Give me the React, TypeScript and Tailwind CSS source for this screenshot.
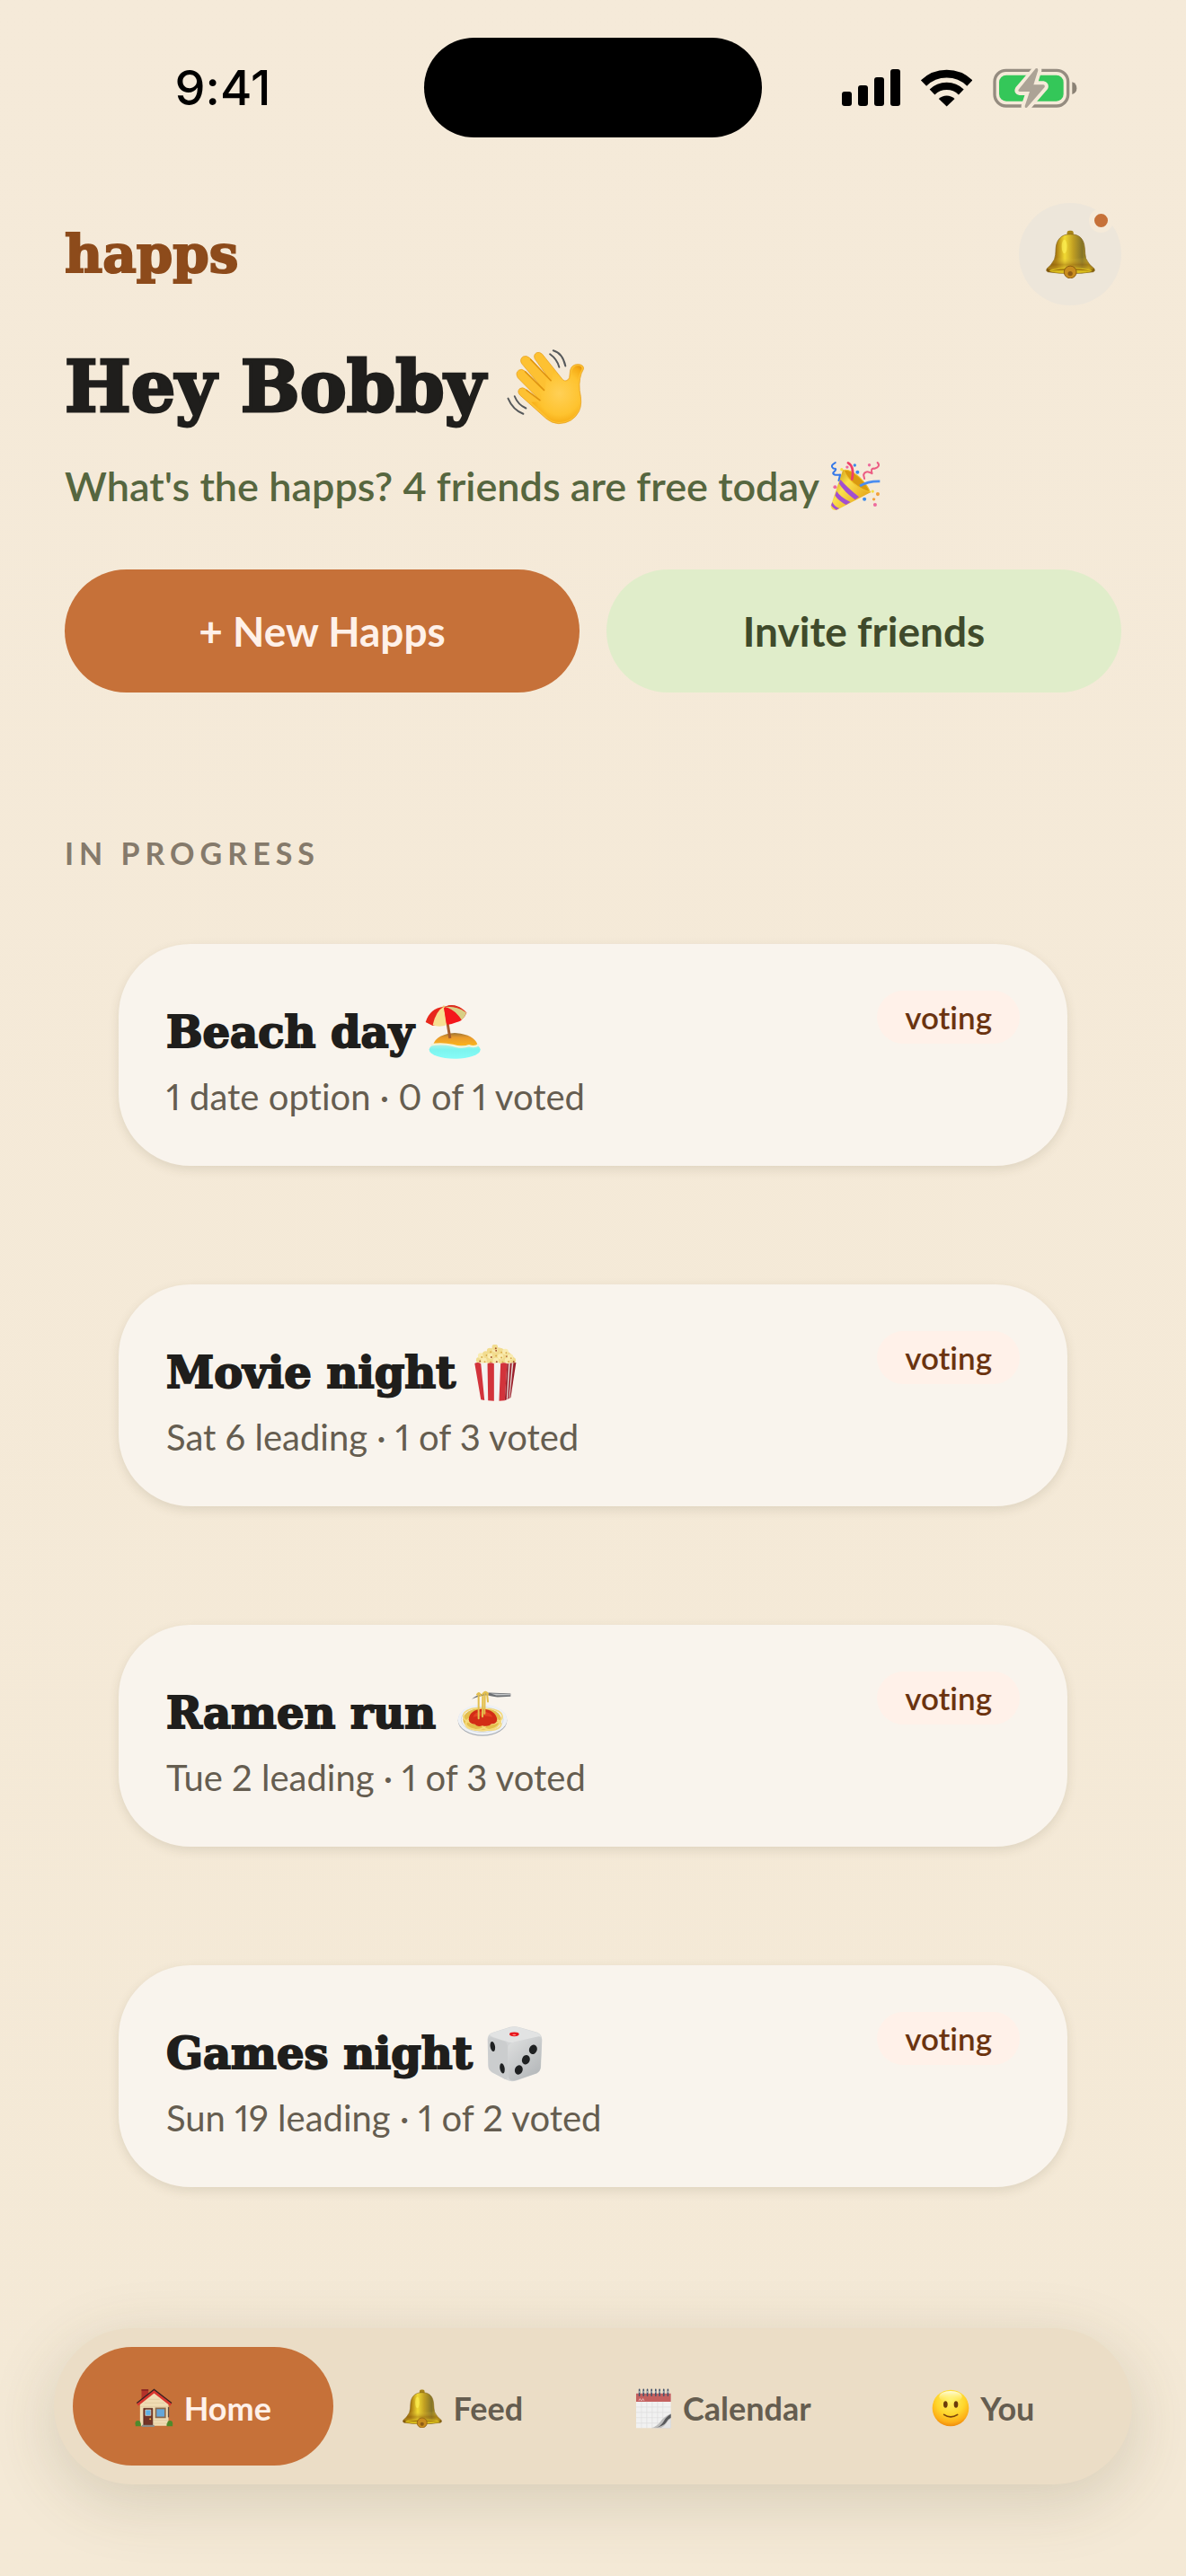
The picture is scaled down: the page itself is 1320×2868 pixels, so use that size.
import { useId, type ReactNode } from "react";

const display = "font-['DejaVu_Serif',serif] font-bold";

function Wave() {
  const id = useId();
  const tone = `url(#${id})`;
  return (
    <svg role="img" aria-label="waving hand" viewBox="68 52 262 254" className="h-[84px] w-[87px] shrink-0">
      <defs>
        <radialGradient id={id} gradientUnits="userSpaceOnUse" cx="245" cy="200" r="120">
          <stop offset="0" stopColor="#ffd056" />
          <stop offset="0.6" stopColor="#fec32f" />
          <stop offset="0.85" stopColor="#f6ab14" />
          <stop offset="1" stopColor="#e08a0a" />
        </radialGradient>
      </defs>
      <path
        fill="#fdc132"
        stroke="#e39a12"
        strokeWidth="2"
        d="M187 68 L256 154 Q268 164 278 148 L281 122 Q286 102 308 102 Q328 104 326 118 Q309 146 313 190 Q323 235 311 260 Q290 301 242 302 Q218 301 200 285 L112 206 Q101 194 111 184 Q121 177 133 187 L180 224 L105 148 Q95 131 108 122 Q118 116 129 125 L193 190 L118 100 Q109 85 123 76 Q134 71 145 81 L215 158 L162 84 Q156 70 168 63 Q178 59 187 68 Z"
      />
      <path
        fill={tone}
        d="M224 120 L256 156 Q270 166 281 150 Q284 116 300 108 Q320 104 320 118 Q304 146 309 190 Q319 235 307 258 Q286 296 242 297 Q218 296 204 281 L150 230 L186 226 L172 168 L197 190 L200 140 L219 158Z"
      />
      <path fill="none" stroke="#df9410" strokeWidth="5" strokeLinecap="round" d="M148 86 L216 157 M130 127 L193 189 M134 189 L179 223" />
      <g fill="none" stroke="#56595b" strokeWidth="6" strokeLinecap="round">
        <path d="M213 68 Q237 85 244 112M224 56 Q255 64 265 108M94 210 Q105 238 132 250M72 217 Q88 255 123 269" />
      </g>
    </svg>
  );
}

function Party() {
  const id = useId();
  return (
    <svg role="img" aria-label="party popper" viewBox="1150 433 166 166" className="size-[56px] shrink-0">
      <defs>
        <linearGradient id={id} x1="0" y1="0.2" x2="0.8" y2="0.8">
          <stop offset="0" stopColor="#c8930c" />
          <stop offset="0.4" stopColor="#fbe04d" />
          <stop offset="1" stopColor="#e7a91b" />
        </linearGradient>
      </defs>
      <path fill={`url(#${id})`} d="M1192 463 L1152 582 Q1153 599 1172 595 L1284 537 Q1250 480 1192 463Z" />
      <path fill="#a24fd0" d="M1184 495 Q1205 520 1245 552 L1232 561 Q1200 540 1179 508Z M1171 533 Q1185 555 1217 569 L1202 578 Q1178 566 1166 548Z M1157 569 Q1164 583 1180 590 L1170 595 Q1157 588 1153 580Z" />
      <path fill="#d99a10" stroke="#f2c22e" strokeWidth="3" d="M1195 464 Q1215 460 1246 487 Q1275 515 1281 536 Q1255 530 1226 506 Q1200 482 1195 464Z" />
      <path fill="none" stroke="#ef3f68" strokeWidth="8" strokeLinecap="round" d="M1209 440 Q1231 452 1222 494" />
      <path fill="none" stroke="#4b8df0" strokeWidth="8" d="M1248 516 Q1275 500 1314 501" />
      <path fill="none" stroke="#3478e8" strokeWidth="6" strokeLinecap="round" strokeLinejoin="round" d="M1167 439 Q1148 449 1160 458 Q1177 458 1160 472 Q1157 482 1183 479 L1178 498" />
      <path fill="none" stroke="#ec5d83" strokeWidth="6" strokeLinecap="round" strokeLinejoin="round" d="M1306 439 Q1318 452 1296 459 Q1282 456 1288 475 Q1265 462 1260 480 L1263 492" />
      <g fill="#3d8bea"><circle cx="1231" cy="448" r="5" /><circle cx="1240" cy="471" r="6" /><circle cx="1263" cy="560" r="6" /></g>
      <g fill="#ed6b9d"><circle cx="1206" cy="454" r="5" /><circle cx="1279" cy="447" r="5" /><circle cx="1166" cy="520" r="6" /><circle cx="1298" cy="578" r="6" /></g>
      <g fill="#f3a13b"><circle cx="1307" cy="543" r="6" /><circle cx="1294" cy="560" r="5" /></g>
      <g fill="#f5df42"><circle cx="1188" cy="462" r="5" /><circle cx="1290" cy="534" r="5" /></g>
    </svg>
  );
}

function Bell({ className }: { className: string }) {
  const id = useId();
  return (
    <svg role="img" aria-label="bell" viewBox="787 618 168 164" className={className}>
      <defs>
        <linearGradient id={id}>
          <stop offset="0" stopColor="#7d5209" />
          <stop offset="0.2" stopColor="#a8780f" />
          <stop offset="0.38" stopColor="#f2da33" />
          <stop offset="0.55" stopColor="#c2a022" />
          <stop offset="0.74" stopColor="#857428" />
          <stop offset="0.88" stopColor="#b89a1c" />
          <stop offset="1" stopColor="#765008" />
        </linearGradient>
        <linearGradient id={`${id}b`} x1="0" y1="0" x2="0" y2="1">
          <stop offset="0" stopColor="#f0d84a" stopOpacity="0" />
          <stop offset="0.55" stopColor="#9a6a10" stopOpacity="0.5" />
          <stop offset="1" stopColor="#f0d030" stopOpacity="0.5" />
        </linearGradient>
      </defs>
      <rect x="859" y="620" width="22" height="18" rx="8" fill="#a88518" />
      <path fill={`url(#${id})`} stroke="#7b5a12" strokeWidth="2" d="M870 632 C838 632 823 652 821 680 Q821 704 816 718 Q806 738 790 750 Q787 757 793 760 Q870 772 949 760 Q955 757 952 750 Q930 733 923 714 Q920 700 919 678 C916 648 902 632 870 632Z" />
      <path fill={`url(#${id}b)`} d="M818 710 Q870 722 922 710 Q932 735 951 750 Q870 764 791 750 Q810 732 818 710Z" />
      <ellipse cx="871" cy="756" rx="72" ry="9" fill="#d8bb1c" />
      <path fill="#875708" d="M800 757 Q870 742 942 757 Q870 750 800 757Z" />
      <circle cx="870" cy="761" r="21" fill="#c98c1e" stroke="#8a5c10" strokeWidth="3" />
      <circle cx="870" cy="766" r="8" fill="#8f5c16" />
      <ellipse cx="850" cy="674" rx="9" ry="24" fill="#fff35a" opacity="0.6" />
    </svg>
  );
}

function Beach() {
  const id = useId();
  return (
    <svg role="img" aria-label="beach with umbrella" viewBox="42 52 190 186" className="h-[62px] w-[63px] shrink-0">
      <defs>
        <linearGradient id={id} x1="0" y1="0" x2="0" y2="1">
          <stop offset="0" stopColor="#d6efe0" />
          <stop offset="0.5" stopColor="#7df4ee" />
          <stop offset="1" stopColor="#86fcf8" />
        </linearGradient>
        <linearGradient id={`${id}s`} x1="0" y1="0" x2="0" y2="1">
          <stop offset="0" stopColor="#9c7434" />
          <stop offset="0.35" stopColor="#e89a2c" />
          <stop offset="1" stopColor="#fdb51c" />
        </linearGradient>
      </defs>
      <ellipse cx="142" cy="204" rx="86" ry="31" fill={`url(#${id})`} />
      <path fill={`url(#${id}s)`} d="M70 186 Q82 152 142 148 Q206 152 218 186 Q210 196 190 188 Q160 196 135 188 Q100 186 70 186Z" />
      <path fill="none" stroke="#f3f4d8" strokeWidth="7" d="M62 188 Q100 182 135 190 Q165 200 190 191 Q210 198 222 187" />
      <path stroke="#a55c2e" strokeWidth="9" d="M117 112 L126 166" />
      <path fill="#e8281c" d="M44 112 Q58 66 105 60 Q150 44 182 80 Q176 96 163 106 L114 116 L68 124Z" />
      <path fill="#f7e092" d="M105 60 Q78 75 68 122 Q90 130 114 122 Z" />
      <path fill="#f4171c" d="M105 60 L116 121 Q145 116 165 105 Q143 68 105 60Z" />
      <path fill="#d8cf86" d="M105 60 Q153 57 181 80 Q177 93 165 105 Q143 68 105 60Z" />
      <path fill="#d83324" d="M113 59 Q135 48 164 66 Q140 58 113 59Z" />
      <circle cx="105" cy="60" r="4" fill="#e9c878" />
    </svg>
  );
}

function Popcorn() {
  const kernels = [
    [104, 102], [120, 104], [140, 105], [160, 104], [180, 105], [200, 103], [217, 103], [110, 88], [126, 82],
    [142, 88], [158, 84], [176, 90], [194, 86], [208, 92], [140, 71], [158, 66], [176, 72], [192, 74], [157, 59],
  ];
  return (
    <svg role="img" aria-label="popcorn" viewBox="86 50 146 190" className="h-[63px] w-[49px] shrink-0">
      <path fill="#efd98e" d="M98 110 Q98 80 130 74 Q158 48 190 68 Q222 80 226 112Z" />
      {kernels.map(([x, y], i) => (
        <g key={i}>
          <circle cx={x} cy={y} r="10" fill={i % 2 ? "#f9ebb0" : "#f2dc8f"} />
          <circle cx={x + 3} cy={y + 4} r="3" fill={i % 3 ? "#d9ab4a" : "#a5542c"} />
        </g>
      ))}
      <path fill="#f4f2f0" d="M89 112 Q100 108 110 114 Q122 108 132 114 Q143 108 154 114 Q165 108 176 114 Q187 108 198 114 L191 238 L112 237Z" />
      <path fill="#d2333b" d="M89 113 Q100 107 110 114 L122 237 L110 235Z M132 114 Q143 108 154 114 L154 239 L134 238Z M176 114 Q187 108 198 114 L190 238 L171 239Z" />
      <path fill="#9c1f2b" d="M198 114 L228 110 L210 228 L190 238Z" />
      <path fill="#e3d8d4" d="M203 113 L208 112 L200 232 L196 234Z M214 111 L219 111 L207 229 L204 230Z" />
    </svg>
  );
}

function Spaghetti() {
  return (
    <svg role="img" aria-label="spaghetti" viewBox="56 60 180 158" className="h-[53px] w-[60px] shrink-0">
      <ellipse cx="140" cy="163" rx="82" ry="52" fill="#a9aeb5" />
      <ellipse cx="140" cy="160" rx="82" ry="51" fill="#eef1f5" />
      <ellipse cx="139" cy="160" rx="70" ry="42" fill="#f5f6f7" stroke="#c6cbd2" strokeWidth="2" />
      <ellipse cx="139" cy="160" rx="64" ry="39" fill="#e3bd4c" />
      <g fill="none" stroke="#f5da7c" strokeWidth="5">
        <ellipse cx="120" cy="148" rx="44" ry="26" />
        <ellipse cx="160" cy="150" rx="46" ry="26" />
        <ellipse cx="140" cy="172" rx="56" ry="24" />
        <ellipse cx="118" cy="176" rx="34" ry="18" />
        <ellipse cx="170" cy="176" rx="32" ry="19" />
      </g>
      <path fill="#d22c16" d="M94 160 Q96 128 140 124 Q184 128 189 160 Q186 176 170 174 Q160 186 140 180 Q122 186 115 176 Q96 174 94 160Z" />
      <path fill="#ec4a27" opacity="0.7" d="M108 152 Q112 134 140 132 Q168 134 174 152 Q140 142 108 152Z" />
      <path fill="#6d7074" d="M104 92 Q120 76 150 72 L162 70 L234 73 L234 83 L190 85 Q168 82 158 78 Q125 80 104 92Z" />
      <path fill="#c8cacc" d="M168 73 L234 75 L234 78 L186 79Z" />
      <g fill="none" stroke="#e3bf4e" strokeWidth="6" strokeLinecap="round">
        <path d="M127 74 L127 156 M141 82 L140 150 M148 70 L147 140 M155 72 L158 100" />
        <path d="M122 76 Q130 66 134 80 M140 76 Q150 60 158 74" />
      </g>
    </svg>
  );
}

function Dice() {
  const id = useId();
  return (
    <svg role="img" aria-label="game die" viewBox="68 50 186 188" className="h-[63px] w-[62px] shrink-0">
      <defs>
        <linearGradient id={id} x1="0" y1="0" x2="0.7" y2="1">
          <stop offset="0" stopColor="#e0e1e1" />
          <stop offset="1" stopColor="#b5b8ba" />
        </linearGradient>
      </defs>
      <path fill="#d2d4d5" d="M70 100 Q68 82 84 74 L145 55 Q160 51 178 56 L236 73 Q252 80 252 98 L248 190 Q246 204 234 210 L168 233 Q150 240 134 232 L84 206 Q72 198 72 184Z" />
      <path fill="#e2e3e3" d="M76 82 Q80 76 90 73 L145 56 Q160 52 178 57 L236 74 Q246 78 248 86 Q230 94 165 104 Q145 110 132 102 Q90 92 76 82Z" />
      <path fill={`url(#${id})`} d="M138 122 Q140 108 160 104 L240 86 Q251 86 251 100 L247 190 Q245 204 234 209 L168 232 Q140 240 138 216Z" />
      <path fill="#cbcdce" d="M71 98 Q74 84 92 92 L124 102 Q138 108 137 124 L137 220 Q136 236 122 226 L84 205 Q73 197 73 184Z" />
      <ellipse cx="159" cy="79" rx="16" ry="7" fill="#e8161c" />
      <ellipse cx="159" cy="81" rx="6" ry="2" fill="#ff8a84" />
      <g fill="#1f2122">
        <ellipse cx="87" cy="120" rx="8" ry="17" transform="rotate(-10 87 120)" />
        <ellipse cx="119" cy="193" rx="8" ry="17" transform="rotate(-10 119 193)" />
        <ellipse cx="222" cy="130" rx="13" ry="16" transform="rotate(20 222 130)" />
        <ellipse cx="198" cy="164" rx="13" ry="16" transform="rotate(20 198 164)" />
        <ellipse cx="174" cy="198" rx="13" ry="16" transform="rotate(20 174 198)" />
      </g>
    </svg>
  );
}

function House() {
  return (
    <svg role="img" aria-label="house" viewBox="58 89 128 132" className="h-[44px] w-[43px] shrink-0">
      <path fill="#b3322a" d="M80 93 H103 V112 L80 132Z" />
      <path fill="#7e241f" d="M80 93 H103 V97 H80Z" />
      <path fill="#f0dcb4" d="M75 140 L122 102 L170 140 V214 H75Z" />
      <path stroke="#dcc598" strokeWidth="2" d="M76 150 H169 M90 138 H157 M104 126 H141 M119 196 H169 M119 206 H169" />
      <path fill="none" stroke="#3b2222" strokeWidth="6" d="M65 139 L122 94 L180 139" />
      <path fill="none" stroke="#d93830" strokeWidth="8" d="M67 144 L122 101 L178 144" />
      <path fill="#733426" stroke="#4f2118" strokeWidth="2" d="M87 156 H117 V212 H87Z" />
      <path fill="#5fb0e6" stroke="#efe0c0" strokeWidth="2" d="M93 161 H111 V180 H93Z" />
      <circle cx="109" cy="192" r="3" fill="#e8b23a" />
      <path fill="#65a6d8" stroke="#8d6a4c" strokeWidth="5" d="M128 156 H159 V186 H128Z" />
      <path fill="#5c4a42" d="M168 152 H172 V186 H168Z" />
      <path fill="#8b8a88" d="M82 211 H122 L124 218 H80Z" />
      <g fill="#4f8a2c">
        <circle cx="68" cy="206" r="9" />
        <circle cx="175" cy="206" r="9" />
        <path d="M60 207 H78 V216 H60Z M164 207 H184 V216 H164Z" />
      </g>
    </svg>
  );
}

function CalendarEmoji() {
  return (
    <svg role="img" aria-label="spiral calendar" viewBox="72 87 124 136" className="h-[45px] w-[41px] shrink-0">
      <path fill="#f1f1f1" d="M75 104 H192 V221 H75Z" />
      <path fill="#c4605f" d="M75 104 H192 V132 H75Z" />
      <path stroke="#dedede" strokeWidth="2" d="M75 150 H192 M75 168 H192 M75 186 H192 M75 204 H192 M93 132 V221 M111 132 V221 M129 132 V221 M147 132 V221 M165 132 V221" />
      <path fill="#bdbdbd" d="M192 172 Q168 184 156 200 Q146 214 126 221 H192Z" />
      <path fill="#58595b" d="M192 174 Q174 184 168 198 Q158 216 138 221 Q168 214 176 202 Q182 190 192 186Z" />
      <path fill="#e4e4e4" d="M192 188 Q180 196 176 206 Q168 218 158 221 H192Z" />
      <path fill="none" stroke="#f4dddd" strokeWidth="2" d="M84 129 L88 122 L92 129 M94 129 L98 122 L102 129" />
      <g stroke="#46546a" strokeWidth="5" strokeLinecap="round">
        <path d="M86 91 V112 M100 91 V112 M113 91 V112 M127 91 V112 M141 91 V112 M154 91 V112 M168 91 V112 M182 91 V112" />
      </g>
      <g stroke="#cfe0f0" strokeWidth="2">
        <path d="M86 96 V102 M100 96 V102 M113 96 V102 M127 96 V102 M141 96 V102 M154 96 V102 M168 96 V102 M182 96 V102" />
      </g>
    </svg>
  );
}

function Smile() {
  const id = useId();
  return (
    <svg role="img" aria-label="smiling face" viewBox="1072 92 126 126" className="size-[42px] shrink-0">
      <defs>
        <radialGradient id={id} cx="0.5" cy="0.3" r="0.7">
          <stop offset="0" stopColor="#fff36b" />
          <stop offset="0.55" stopColor="#ffd62c" />
          <stop offset="0.85" stopColor="#fdae17" />
          <stop offset="1" stopColor="#ee8a0c" />
        </radialGradient>
        <linearGradient id={`${id}h`} x1="0" y1="0" x2="0" y2="1">
          <stop offset="0" stopColor="#fffde0" />
          <stop offset="1" stopColor="#fff780" stopOpacity="0" />
        </linearGradient>
      </defs>
      <circle cx="1135" cy="155" r="61" fill={`url(#${id})`} />
      <ellipse cx="1135" cy="117" rx="38" ry="19" fill={`url(#${id}h)`} />
      <ellipse cx="1118" cy="143" rx="7" ry="11" fill="#6b3c0b" />
      <ellipse cx="1153" cy="143" rx="7" ry="11" fill="#6b3c0b" />
      <path fill="none" stroke="#7a430b" strokeWidth="5" strokeLinecap="round" d="M1113 177 Q1135 192 1158 177" />
    </svg>
  );
}

function StatusBar() {
  return (
    <div className="grid grid-cols-[1fr_376px_1fr] items-center pt-[42px]">
      <time className="pl-6 text-center font-['Inter',sans-serif] text-[54px] leading-none font-medium text-black">9:41</time>
      <div className="h-[111px] rounded-full bg-black" />
      <div className="flex items-center justify-center gap-[23px] pr-8">
        <svg role="img" aria-label="signal" viewBox="111 78 195 123" className="h-[41px] w-[65px]">
          <rect x="111" y="153" width="33" height="48" rx="9" />
          <rect x="165" y="132" width="33" height="69" rx="9" />
          <rect x="219" y="105" width="33" height="96" rx="9" />
          <rect x="273" y="78" width="33" height="123" rx="9" />
        </svg>
        <svg role="img" aria-label="wifi" viewBox="374 75 173 127" className="h-[42px] w-[57px]">
          <path fill="none" stroke="#000" strokeWidth="27" d="M383 122 A112 112 0 0 1 539 122" />
          <path fill="none" stroke="#000" strokeWidth="25" d="M412 152 A70 70 0 0 1 510 152" />
          <path d="M461 201 L434 175 A39 39 0 0 1 488 175 Z" />
        </svg>
        <svg role="img" aria-label="battery charging" viewBox="614 70 282 138" className="h-[46px] w-[94px]">
          <rect x="620" y="80" width="245" height="119" rx="38" fill="none" stroke="#958c80" strokeWidth="10" />
          <rect x="635" y="96" width="215" height="87" rx="24" fill="#34c759" />
          <path fill="#8b8275" d="M879 119 Q894 124 894 140 Q894 156 879 160Z" />
          <path
            fill="#f5ead9"
            stroke="#f5ead9"
            strokeWidth="24"
            strokeLinejoin="round"
            d="M760 74 L700 144 Q697 150 704 151 L737 151 L721 199 Q720 208 728 204 L787 136 Q789 129 782 128 L750 128 L765 80 Q765 72 760 74Z"
          />
          <path
            fill="#aca396"
            d="M757 74 L700 144 Q697 150 704 151 L737 151 L721 199 Q720 208 728 204 L787 136 Q789 129 782 128 L750 128 L765 80 Q765 70 757 74Z"
          />
        </svg>
      </div>
    </div>
  );
}

type Plan = { title: string; detail: string; icon: ReactNode; gap: string };

const plans: Plan[] = [
  { title: "Beach day", detail: "1 date option · 0 of 1 voted", icon: <Beach />, gap: "gap-3" },
  { title: "Movie night", detail: "Sat 6 leading · 1 of 3 voted", icon: <Popcorn />, gap: "gap-5" },
  { title: "Ramen run", detail: "Tue 2 leading · 1 of 3 voted", icon: <Spaghetti />, gap: "gap-6" },
  { title: "Games night", detail: "Sun 19 leading · 1 of 2 voted", icon: <Dice />, gap: "gap-4" },
];

function PlanCard({ title, detail, icon, gap }: Plan) {
  return (
    <li className="flex items-start justify-between rounded-[80px] bg-[#f9f4ed] px-[53px] pt-[52px] pb-[53px] shadow-[0_4px_12px_rgba(80,70,40,0.13)]">
      <div className="pt-[14px]">
        <h3 className={`flex items-center text-[48px] leading-[64px] text-[#1f1e1c] [-webkit-text-stroke:2px_#1f1e1c] ${display} ${gap}`}>
          {title}
          {icon}
        </h3>
        <p className="mt-[16px] text-[40px] leading-[48px] text-[#655d50] proportional-nums">{detail}</p>
      </div>
      <span className="rounded-full bg-[#fff1e9] px-[31px] text-[35px] leading-[59px] font-semibold text-[#6b3410]">voting</span>
    </li>
  );
}

const tabs = [
  { label: "Home", icon: <House />, active: true },
  { label: "Feed", icon: <Bell className="h-[43px] w-[44px] shrink-0" />, active: false },
  { label: "Calendar", icon: <CalendarEmoji />, active: false },
  { label: "You", icon: <Smile />, active: false },
];

export default function App() {
  return (
    <div className="flex min-h-screen flex-col bg-linear-to-b from-[#f5ead9] to-[#f4e9d6] font-['Lato',sans-serif] [font-variant-ligatures:none]">
      <StatusBar />

      <main className="px-[72px]">
        <header>
          <div className="mt-[73px] flex items-center justify-between">
            <span className={`text-[58px] leading-none text-[#8d4b1b] [-webkit-text-stroke:2px_#8d4b1b] ${display}`}>happs</span>
            <button type="button" aria-label="Notifications" className="relative flex size-[114px] items-center justify-center rounded-full bg-[#ede6da]">
              <Bell className="h-[54px] w-[55px]" />
              <span className="absolute top-[6px] right-[9px] size-[27px] rounded-full border-6 border-[#f5ead9] bg-[#c67139]" />
            </button>
          </div>
          <h1 className={`mt-[45px] flex items-center gap-6 text-[78px] leading-[92px] text-[#1f1e1c] [-webkit-text-stroke:3px_#1f1e1c] ${display}`}>
            Hey Bobby
            <Wave />
          </h1>
          <p className="mt-[34px] flex items-center gap-3 text-[45px] leading-[60px] font-semibold text-[#56663f]">
            What's the happs? 4 friends are free today
            <Party />
          </p>
          <div className="mt-[63px] grid grid-cols-2 gap-[30px] text-[46px] font-bold">
            <button type="button" className="h-[137px] rounded-full bg-[#c67139] text-[#fff1e9]">+ New Happs</button>
            <button type="button" className="h-[137px] rounded-full bg-[#e0edca] text-[#3f4a2b]">Invite friends</button>
          </div>
        </header>

        <section className="mt-[159px]">
          <h2 className="text-[34px] leading-[40px] font-bold tracking-[6px] text-[#857a6b]">IN PROGRESS</h2>
          <ul className="mx-[60px] mt-[81px] flex flex-col gap-[132px]">
            {plans.map((plan) => (
              <PlanCard key={plan.title} {...plan} />
            ))}
          </ul>
        </section>
      </main>

      <nav className="mx-[60px] mt-auto mb-[102px] grid grid-cols-4 rounded-full bg-[#ebddc6] p-[21px] shadow-[0_18px_72px_rgba(80,70,40,0.18)]">
        {tabs.map(({ label, icon, active }) => (
          <a
            key={label}
            href={`#${label.toLowerCase()}`}
            aria-current={active ? "page" : undefined}
            className={`flex h-[132px] items-center justify-center gap-3 rounded-full pt-[4px] text-[36px] font-bold ${
              active ? "bg-[#c67139] text-[#fff1e9]" : "text-[#655d50]"
            }`}
          >
            {icon}
            {label}
          </a>
        ))}
      </nav>
    </div>
  );
}
